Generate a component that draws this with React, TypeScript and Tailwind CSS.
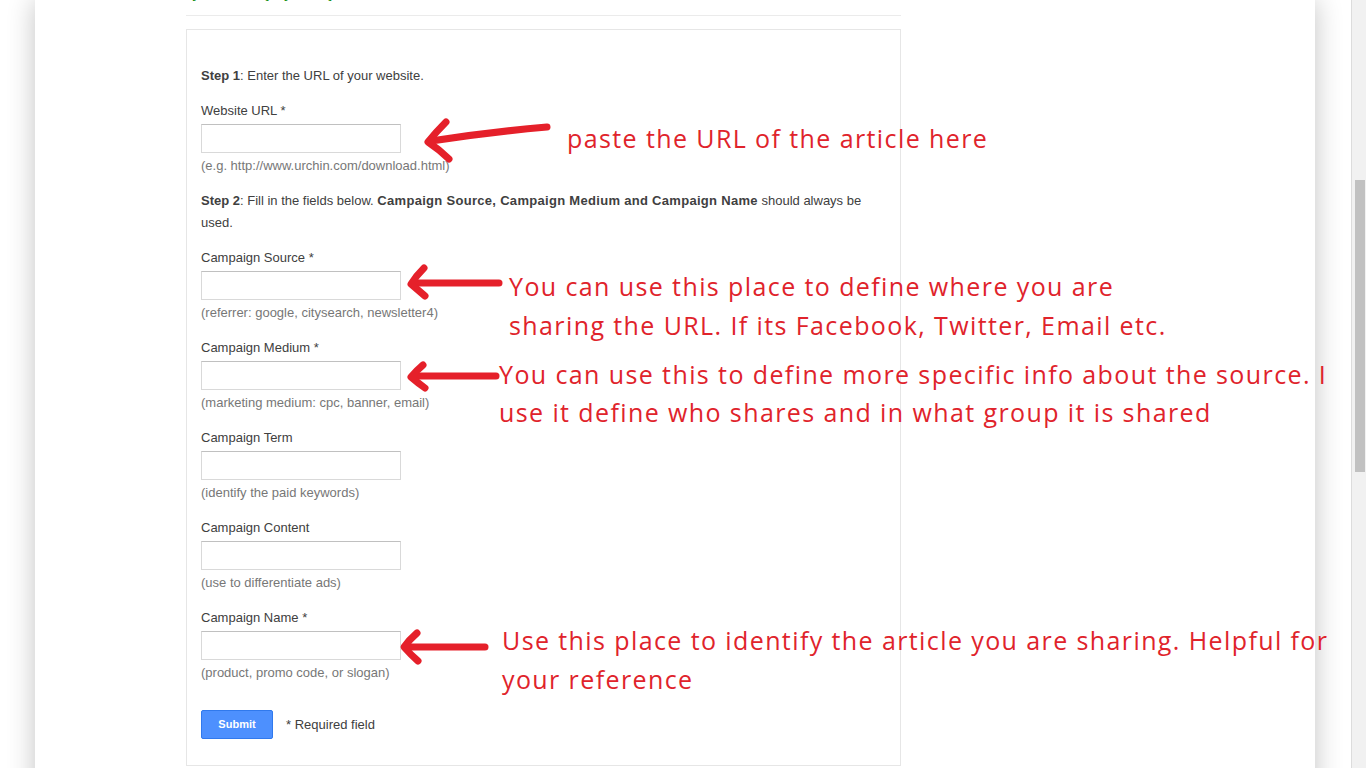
import React from "react";

const Field = ({ label, hint, first }: { label: string; hint: string; first?: boolean }) => (
  <div className={first ? "mt-[15px]" : "mt-[17px]"}>
    <div className="text-[13px] leading-[18px] text-[#404040]">{label}</div>
    <div className="mt-[4px] h-[29px] w-[200px] border border-[#d9d9d9] border-t-[#c0c0c0] bg-white" />
    <div className="mt-[4px] text-[13px] leading-[18px] text-[#777777]">{hint}</div>
  </div>
);

export default function App() {
  const red = "text-[#e0232b]";
  return (
    <div
      className="relative flex h-[768px] w-[1366px] overflow-hidden bg-white"
      style={{ fontFamily: '"Liberation Sans", Arial, sans-serif' }}
    >
      <div className="flex-1 overflow-hidden bg-white">
        <div className="ml-[35px] h-[800px] w-[1280px] bg-white pl-[151px] shadow-[0_0_26px_rgba(0,0,0,0.24)]">
          <div className="w-[715px]">
            <div className="h-[16px] overflow-hidden border-b border-[#ebebeb]">
              <div className="-mt-[14px] pl-[6px] text-[13px] leading-[16px] text-[#0a8a0a] whitespace-pre">
                [Link Lab ttle]    [Mail alt],
              </div>
            </div>
            <div className="mt-[13px] border border-[#e6e6e6] pb-[26px] pl-[14px] pr-[20px] pt-[35px]">
              <p className="text-[13px] leading-[22px] text-[#404040]">
                <b>Step 1</b>: Enter the URL of your website.
              </p>
              <Field first label="Website URL *" hint="(e.g. http://www.urchin.com/download.html)" />
              <p className="mt-[15px] text-[13px] leading-[22px] text-[#404040]">
                <b>Step 2</b>: Fill in the fields below.{" "}
                <b className="tracking-[0.3px]">Campaign Source, Campaign Medium and Campaign Name</b> should always be used.
              </p>
              <Field first label="Campaign Source *" hint="(referrer: google, citysearch, newsletter4)" />
              <Field label="Campaign Medium *" hint="(marketing medium: cpc, banner, email)" />
              <Field label="Campaign Term" hint="(identify the paid keywords)" />
              <Field label="Campaign Content" hint="(use to differentiate ads)" />
              <Field label="Campaign Name *" hint="(product, promo code, or slogan)" />
              <div className="mt-[28px] flex items-center">
                <div className="flex h-[29px] w-[72px] items-center justify-center rounded-[2px] border border-[#3079ed] bg-[#4d90fe] text-[11px] font-bold text-white">
                  Submit
                </div>
                <span className="ml-[13px] text-[13px] text-[#404040]">* Required field</span>
              </div>
            </div>
          </div>
        </div>
      </div>
      <div className="w-[15px] border-l border-[#dcdcdc] bg-[#f1f1f1] pt-[180px]">
        <div className="ml-[3px] h-[292px] w-[10px] bg-[#c1c1c1]" />
      </div>

      <svg
        className="pointer-events-none absolute left-0 top-0"
        width="1366"
        height="768"
        fill="none"
        stroke="#e5202a"
        strokeWidth="7"
        strokeLinecap="round"
        strokeLinejoin="round"
      >
        <path d="M547 127 Q490 132 431 141" />
        <path d="M446 122 Q436 132 428 142 Q440 150 449 159" />
        <path d="M499 283 L413 283" />
        <path d="M424 268 Q416 276 411 284 Q418 290 425 296" />
        <path d="M496 376 L413 376" />
        <path d="M423 365 Q416 371 411 377 Q418 383 425 388" />
        <path d="M485 647 L405 647" />
        <path d="M417 633 Q409 640 404 647 Q411 655 418 661" />
      </svg>

      <div
        className={`pointer-events-none absolute inset-0 ${red} text-[25px] leading-[39px] tracking-[1.4px] whitespace-pre`}
        style={{ fontFamily: '"Open Sans", "Noto Sans", sans-serif' }}
      >
        <div className="absolute left-[567px] top-[119px]">paste the URL of the article here</div>
        <div className="absolute left-[509px] top-[267px]">
          {"You can use this place to define where you are\nsharing the URL. If its Facebook, Twitter, Email etc."}
        </div>
        <div className="absolute left-[499px] top-[355px] leading-[38px]">
          {"You can use this to define more specific info about the source. I\nuse it define who shares and in what group it is shared"}
        </div>
        <div className="absolute left-[502px] top-[621px]">
          {"Use this place to identify the article you are sharing. Helpful for\nyour reference"}
        </div>
      </div>
    </div>
  );
}
